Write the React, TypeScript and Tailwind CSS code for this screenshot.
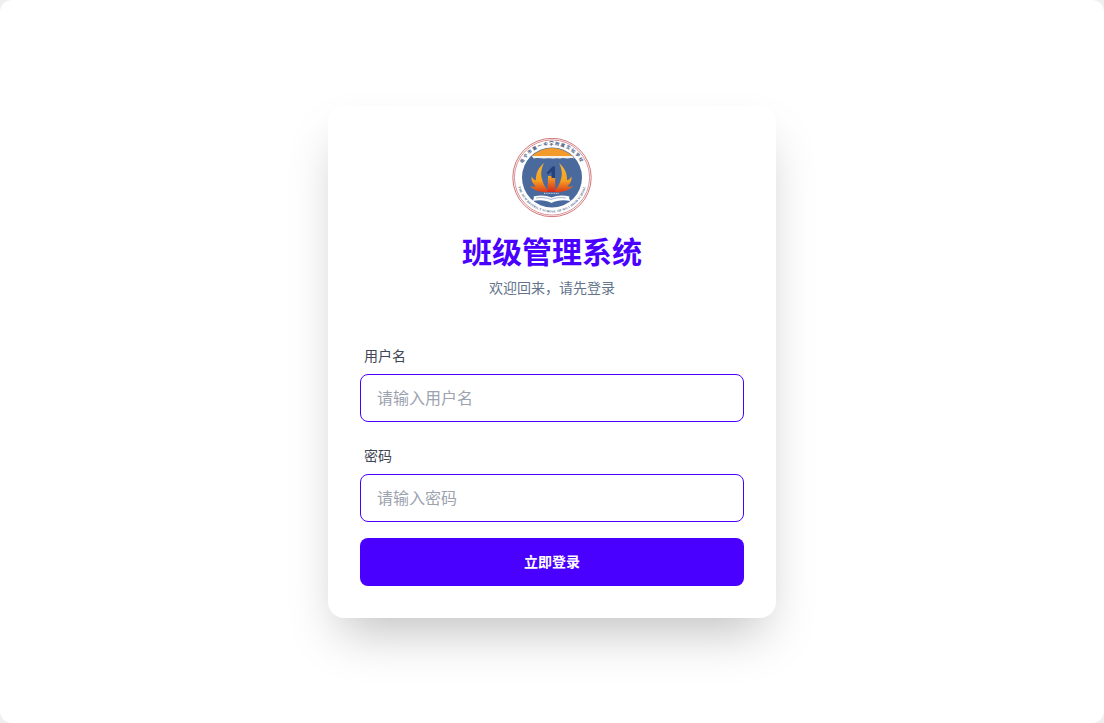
const Logo = () => (
  <svg width="80" height="80" viewBox="0 0 80 80">
    <defs>
      <linearGradient id="flame" x1="0" y1="0" x2="0" y2="1">
        <stop offset="0" stopColor="#f7b733" />
        <stop offset="0.6" stopColor="#f6a020" />
        <stop offset="1" stopColor="#dc3a1c" />
      </linearGradient>
      <linearGradient id="core" x1="0" y1="0" x2="0" y2="1">
        <stop offset="0" stopColor="#f6a623" />
        <stop offset="1" stopColor="#d42a1a" />
      </linearGradient>
      <path id="topArc" d="M7.5 39.5a32.5 32.5 0 0 1 65 0" />
      <path id="bottomArc" d="M5 39.5a35 35 0 0 0 70 0" />
      <path
        id="wing"
        d="M37 54C31 55 22 53 18 48c2.500 1 4.500 1 6 .3-3-2.300-5-5.300-4.500-9.800 1.500 2.500 3 3.500 4.500 3.800C23.500 36 26 30 32 25c-3 6-3.500 11-2 16 1 5 4 9 7 13z"
      />
    </defs>
    <circle cx="40" cy="39.5" r="39.2" fill="#fff" stroke="#c8666c" strokeWidth="0.9" />
    <circle cx="40" cy="39.5" r="37.6" fill="none" stroke="#c8666c" strokeWidth="0.7" />
    <circle cx="40" cy="39.5" r="30" fill="#4a6a9e" />
    <path d="M19.7 18a30 30 0 0 1 40.600 0z" fill="#f39a2b" />
    <path d="M19.7 18h40.600l2 2.400c-3-.6-5-.4-7 .2-3-.8-5-.8-8 0-3-.8-4-.2-7 0-3-.6-5-.4-8 0-4-.8-7-.8-10.600-.2z" fill="#f4f1ea" />
    <text fontSize="4.3" fontWeight="700" fill="#44597f" fontFamily="'Noto Sans CJK SC', sans-serif" letterSpacing="1.3">
      <textPath href="#topArc" startOffset="50%" textAnchor="middle">南宁市第一中学附属实验学校</textPath>
    </text>
    <text fontSize="3.1" fontWeight="700" fill="#44597f" fontFamily="'Liberation Serif', serif" letterSpacing="0.25">
      <textPath href="#bottomArc" startOffset="50%" textAnchor="middle">THE NEW DISTRICT SCHOOL OF NO.1 HIGH SCHOOL</textPath>
    </text>
    <use href="#wing" fill="url(#flame)" />
    <use href="#wing" fill="url(#flame)" transform="matrix(-1 0 0 1 79 0)" />
    <path d="M36 38h7l.5 16h-8z" fill="url(#core)" />
    <path d="M34.500 35l6-6.500h2.500V40h-3.500v-6.500l-3.200 3z" fill="#25427c" />
    <path d="M32 55.300h15" stroke="#e8edf5" strokeWidth="0.9" strokeDasharray="1 .7" />
    <path d="M21.500 58.500c6-1.700 13-1.500 18 1 5-2.500 12-2.700 18-1l-.5 1.500 1.500 3c-7-1.300-14-.8-19 2-5-2.800-12-3.300-19-2l1.500-3z" fill="#fff" />
    <path d="M24 60c5-.8 11-.6 15 1.500 4-2.100 10-2.300 15-1.500" fill="none" stroke="#4a6a9e" strokeWidth="0.5" />
  </svg>
)

const Field = ({ label, placeholder, type }: { label: string; placeholder: string; type: string }) => (
  <div className="flex flex-col">
    <label className="px-1 py-2 text-sm leading-5 text-[#3f4654]">{label}</label>
    <input
      type={type}
      placeholder={placeholder}
      className="h-12 w-full rounded-lg border border-[#4a00ff] bg-white px-4 text-base text-gray-800 outline-none placeholder:text-[#9ca3af]"
    />
  </div>
)

export default function App() {
  return (
    <div className="h-screen bg-[#efefef] font-['Inter','Noto_Sans_CJK_SC',sans-serif]">
      <div className="flex h-full items-center justify-center rounded-xl bg-white">
        <div className="flex w-[448px] flex-col gap-4 rounded-2xl bg-white p-8 shadow-2xl">
          <div className="flex flex-col items-center pb-10">
            <Logo />
            <h1 className="mt-4 text-3xl leading-9 font-bold text-[#4a00ff]">班级管理系统</h1>
            <p className="mt-2 text-sm leading-5 text-[#64748b]">{'欢迎回来\uFF0C请先登录'}</p>
          </div>
          <div className="-mt-4 flex flex-col gap-4">
            <Field label="用户名" placeholder="请输入用户名" type="text" />
            <Field label="密码" placeholder="请输入密码" type="password" />
            <button className="h-12 w-full rounded-lg bg-[#4a00ff] text-sm font-semibold text-white">立即登录</button>
          </div>
        </div>
      </div>
    </div>
  )
}
